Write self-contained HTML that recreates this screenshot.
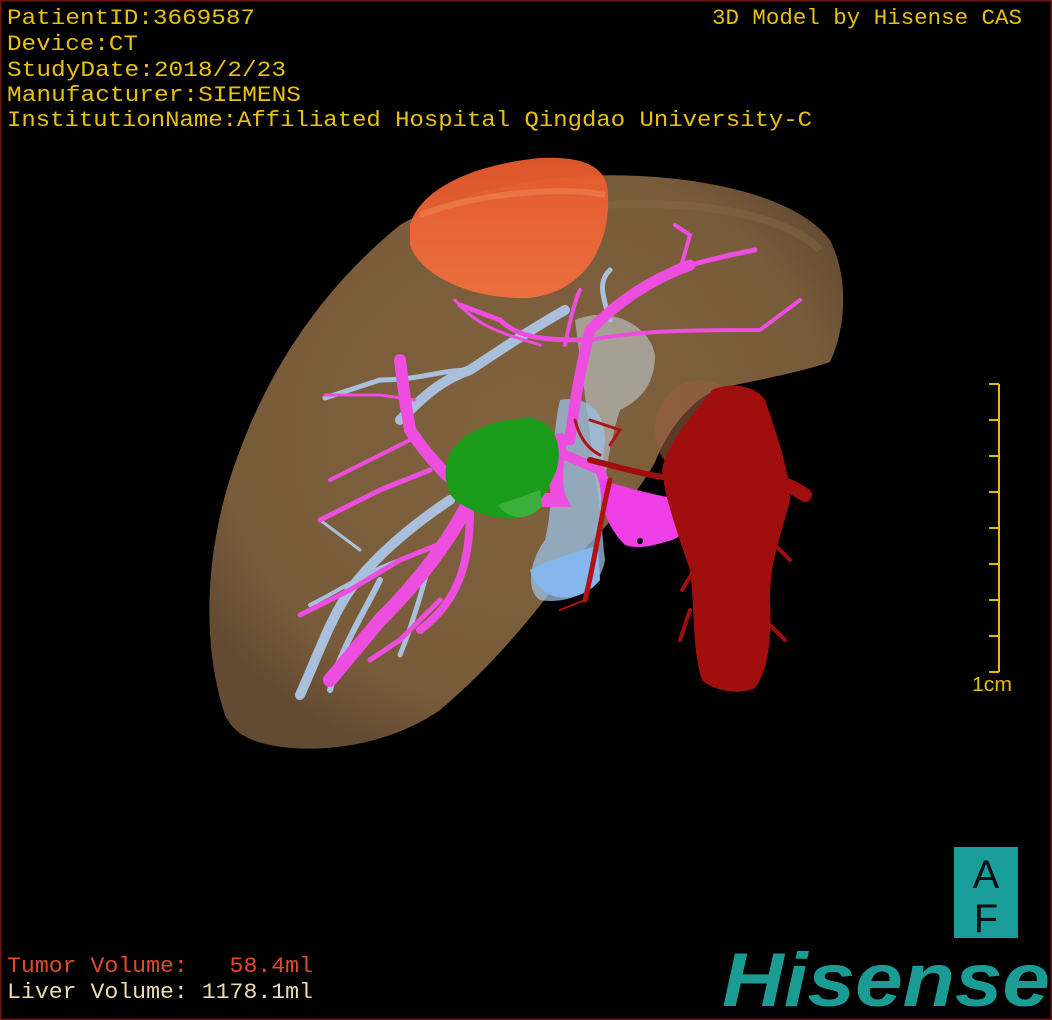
<!DOCTYPE html>
<html><head><meta charset="utf-8"><style>
html,body{margin:0;padding:0;background:#000;}
svg{display:block}
text{font-family:"Liberation Mono","DejaVu Sans Mono",monospace;}
</style></head><body>
<svg width="1052" height="1020" viewBox="0 0 1052 1020" xmlns="http://www.w3.org/2000/svg">
<defs>
<radialGradient id="liv" cx="0.5" cy="0.45" r="0.6">
<stop offset="0" stop-color="#80623e"/><stop offset="0.8" stop-color="#785b3a"/><stop offset="1" stop-color="#634a32"/>
</radialGradient>
<linearGradient id="tum" x1="0" y1="0" x2="0" y2="1">
<stop offset="0" stop-color="#e85a2c"/><stop offset="1" stop-color="#f07040"/>
</linearGradient>
</defs>
<rect width="1052" height="1020" fill="#000"/>
<rect x="0.5" y="0.5" width="1051" height="1019" fill="none" stroke="#6e1414" stroke-width="2"/>

<!-- liver -->
<path d="M225,715 C200,640 205,540 240,450 C270,370 320,290 400,225 C470,185 560,172 640,176 C720,180 800,200 830,240 C850,280 845,330 830,362 C800,372 760,380 720,388 C690,400 668,430 655,462 C635,500 600,530 575,560 C545,600 500,660 440,710 C390,745 320,755 270,745 C245,740 232,730 225,715 Z" fill="url(#liv)"/>
<path d="M600,205 C680,200 780,210 820,250" stroke="#8a6c48" stroke-width="8" fill="none" opacity="0.4"/>
<ellipse cx="700" cy="430" rx="45" ry="50" fill="#9a5e42" opacity="0.6"/>
<!-- IVC pale -->
<path d="M575,320 C610,305 650,325 655,355 C655,385 640,400 620,410 C610,440 605,480 600,510 Z" fill="#c8d4dc" opacity="0.55"/>
<path d="M560,400 C585,395 605,410 605,440 C600,480 600,520 605,560 C600,590 570,605 540,600 C525,590 530,560 545,540 C555,500 550,440 560,400 Z" fill="#9cc0e6" opacity="0.75"/>
<path d="M530,570 C540,605 580,605 600,580 L598,545 C570,555 545,560 530,570 Z" fill="#86b6ee"/>
<!-- tumor -->
<path d="M410,225 C420,190 470,165 540,158 C590,156 608,170 608,195 C610,240 590,290 530,298 C470,300 420,275 410,245 Z" fill="url(#tum)" opacity="0.95"/>
<path d="M420,215 C470,195 560,185 605,195" stroke="#f08a5a" stroke-width="6" fill="none" opacity="0.5"/>

<!-- light blue hepatic veins -->
<g stroke="#a9c0dc" fill="none" stroke-linecap="round">
<path d="M565,310 C530,330 500,350 470,370 C440,380 420,400 400,420" stroke-width="10"/>
<path d="M470,370 C440,370 420,380 380,380 L325,398" stroke-width="5"/>
<path d="M450,500 C420,520 380,550 350,590 C330,620 320,650 300,695" stroke-width="10"/>
<path d="M400,560 C370,570 340,590 310,605" stroke-width="4"/>
<path d="M380,580 C360,620 340,650 330,690" stroke-width="6"/>
<path d="M430,560 C420,600 410,630 400,655" stroke-width="5"/>
<path d="M360,550 L320,520" stroke-width="3"/>
<path d="M610,320 C600,290 600,280 610,270" stroke-width="5"/>
</g>
<!-- pink portal veins -->
<g stroke="#ee4ee0" fill="none" stroke-linecap="round">
<path d="M570,440 C575,400 580,370 590,330 C620,300 650,280 690,265" stroke-width="11"/>
<path d="M690,265 L730,255 L755,250" stroke-width="5"/>
<path d="M680,270 L690,235 L675,225" stroke-width="4"/>
<path d="M590,340 C640,330 700,330 760,330 L800,300" stroke-width="4"/>
<path d="M590,340 C550,340 520,340 500,320 L460,305" stroke-width="5"/>
<path d="M540,345 C510,335 480,330 455,300" stroke-width="3"/>
<path d="M565,345 C570,320 575,300 580,290" stroke-width="4"/>
<path d="M560,440 C555,470 555,490 560,500 L470,500" stroke-width="14"/>
<path d="M470,495 C450,480 430,460 410,430 L405,400 L400,360" stroke-width="12"/>
<path d="M410,440 L370,460 L330,480" stroke-width="4"/>
<path d="M415,400 L380,395 L325,395" stroke-width="3"/>
<path d="M430,470 L380,490 L320,520" stroke-width="5"/>
<path d="M470,500 C450,540 420,580 380,620 L330,680" stroke-width="14"/>
<path d="M470,510 C470,560 460,600 420,630" stroke-width="8"/>
<path d="M450,540 L400,560 L350,590 L300,615" stroke-width="5"/>
<path d="M440,600 L400,640 L370,660" stroke-width="5"/>
<path d="M530,440 L600,470 L610,500" stroke-width="10"/>
</g>
<path d="M600,480 C620,485 650,495 685,500 C692,515 688,535 672,540 C655,545 640,550 625,545 C610,530 600,510 600,480 Z" fill="#ee3ee6"/>
<!-- green -->
<path d="M452,450 C468,428 500,418 532,418 C558,424 563,450 556,472 C546,492 540,507 520,517 C498,522 468,512 452,497 C442,480 445,462 452,450 Z" fill="#1b9b1a"/>
<path d="M498,505 C508,520 528,522 542,506 L540,490 Z" fill="#3ab03a"/>
<!-- red IVC tube -->
<path d="M712,390 C730,382 755,385 765,400 C775,430 790,470 790,500 C780,540 770,560 770,600 C772,640 768,670 755,688 C740,695 715,692 702,680 C692,650 695,610 690,570 C680,540 665,500 662,470 C668,440 690,420 712,390 Z" fill="#a00e0e"/>
<g stroke="#a00e0e" fill="none" stroke-linecap="round">
<path d="M700,475 C740,468 780,478 805,495" stroke-width="14"/>
<path d="M590,460 C630,470 660,480 700,480" stroke-width="6"/>
<path d="M700,560 L682,590 M690,610 L680,640 M770,540 L790,560 M765,620 L785,640" stroke-width="4"/>
</g>
<g stroke="#b01212" fill="none" stroke-linecap="round">
<path d="M610,480 C600,520 595,560 585,600" stroke-width="5"/>
<path d="M585,600 L560,610" stroke-width="2"/>
<path d="M575,420 C580,440 590,450 600,455" stroke-width="3"/>
<path d="M590,420 L620,430 L610,445" stroke-width="3"/>
</g>
<circle cx="640" cy="541" r="3" fill="#000"/>

<!-- text top -->
<g fill="#e8c010" font-size="22">
<text x="7" y="24" textLength="248" lengthAdjust="spacingAndGlyphs">PatientID:3669587</text>
<text x="7" y="50" textLength="131" lengthAdjust="spacingAndGlyphs">Device:CT</text>
<text x="7" y="76" textLength="279" lengthAdjust="spacingAndGlyphs">StudyDate:2018/2/23</text>
<text x="7" y="101" textLength="294" lengthAdjust="spacingAndGlyphs">Manufacturer:SIEMENS</text>
<text x="7" y="126" textLength="805" lengthAdjust="spacingAndGlyphs">InstitutionName:Affiliated Hospital Qingdao University-C</text>
<text x="712" y="24" textLength="310" lengthAdjust="spacingAndGlyphs">3D Model by Hisense CAS</text>
</g>
<!-- scale -->
<g stroke="#e8b810" stroke-width="2">
<line x1="999" y1="384" x2="999" y2="672"/>
<line x1="989" y1="384" x2="999" y2="384"/><line x1="989" y1="420" x2="999" y2="420"/>
<line x1="989" y1="456" x2="999" y2="456"/><line x1="989" y1="492" x2="999" y2="492"/>
<line x1="989" y1="528" x2="999" y2="528"/><line x1="989" y1="564" x2="999" y2="564"/>
<line x1="989" y1="600" x2="999" y2="600"/><line x1="989" y1="636" x2="999" y2="636"/>
<line x1="989" y1="672" x2="999" y2="672"/>
</g>
<text x="972" y="691" fill="#e8b810" font-size="20" textLength="40" lengthAdjust="spacingAndGlyphs" style="font-family:'Liberation Sans',sans-serif">1cm</text>
<!-- bottom text -->
<text x="7" y="972" fill="#e04a2a" font-size="22" textLength="306" lengthAdjust="spacingAndGlyphs" xml:space="preserve">Tumor Volume:   58.4ml</text>
<text x="7" y="998" fill="#f0d8b0" font-size="22" textLength="306" lengthAdjust="spacingAndGlyphs">Liver Volume: 1178.1ml</text>
<!-- AF -->
<rect x="954" y="847" width="64" height="91" fill="#1a9c9a"/>
<text x="986" y="888" fill="#0a1010" font-size="40" text-anchor="middle" style="font-family:'Liberation Sans',sans-serif">A</text>
<text x="986" y="932" fill="#0a1010" font-size="40" text-anchor="middle" style="font-family:'Liberation Sans',sans-serif">F</text>
<!-- Hisense -->
<text x="722" y="1006" fill="#1a9c95" font-size="76" font-weight="bold" font-style="italic" textLength="328" lengthAdjust="spacingAndGlyphs" style="font-family:'Liberation Sans',sans-serif">Hisense</text>
</svg>
</body></html>
